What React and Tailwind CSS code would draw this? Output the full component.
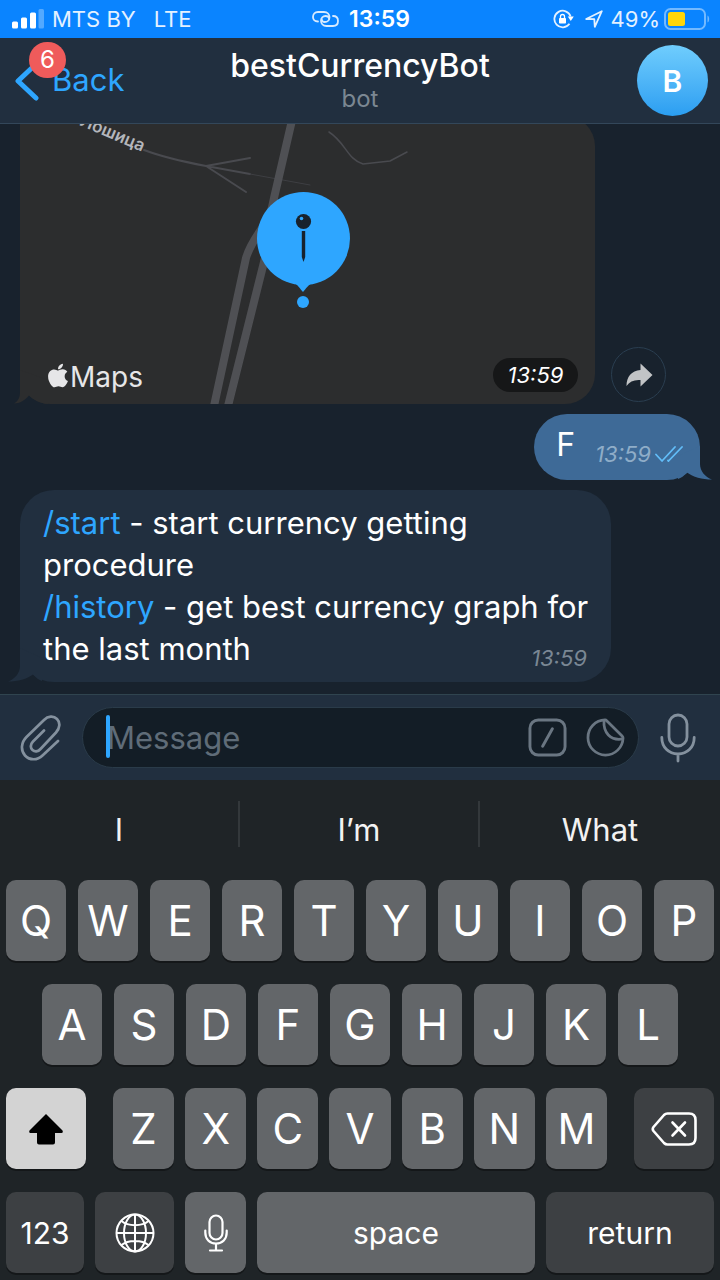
import React, { useState } from "react";
import { FaApple } from "react-icons/fa";

function StatusBar() {
  return (
    <div className="grid h-[38px] shrink-0 grid-cols-[1fr_auto_1fr] items-center bg-[#0a84ff] pl-3 pr-[10px] text-[22px] leading-7 text-[#e4f1ff]">
      <div className="flex items-center gap-2">
        <svg className="h-5 w-8" viewBox="0 0 32 20" fill="#fff" aria-hidden="true">
          <rect x="0" y="12.5" width="6" height="7" rx="1.5" />
          <rect x="9" y="8.5" width="6" height="11" rx="1.5" />
          <rect x="18" y="3.500" width="6" height="16" rx="1.500" />
          <rect x="26.500" y="0" width="5.500" height="19.500" rx="1.500" opacity="0.3" />
        </svg>
        <span>MTS BY</span>
        <span className="ml-[10px]">LTE</span>
      </div>
      <div className="flex items-center gap-[10px]">
        <svg className="h-4 w-[27px]" viewBox="0 0 27 16" fill="none" stroke="#d7eaff" strokeWidth="1.800" strokeLinecap="round" aria-hidden="true">
          <path d="M6 10.500C2.500 10.500 1 8.500 1 6C1 3 3 1 6 1H12C15.500 1 17.500 3.500 17.500 6.200C17.500 9 15.500 11 12.800 11C11 11 9.800 10 9.800 8.500" />
          <path d="M21 5C24.500 5 26 7.500 26 10C26 13 24 15 21 15H14.500C11 15 9 12.500 9 9.800C9 7 11 5 13.500 5C15.500 5 17 6 17 7.500" />
        </svg>
        <span className="text-[23px] font-semibold text-white">13:59</span>
      </div>
      <div className="flex items-center justify-end">
        <svg className="mr-[11px] h-5 w-[21px]" viewBox="0 0 21 20" aria-hidden="true">
          <path d="M17.600 7.500A8.300 8.300 0 1 0 16.500 14.800" fill="none" stroke="#e4f1ff" strokeWidth="1.800" />
          <path d="M14.800 7.500H20.800L17.800 12Z" fill="#fff" />
          <rect x="6" y="9" width="7" height="5.500" rx="0.800" fill="#fff" />
          <path d="M7.500 9V7.500a2 2 0 0 1 4 0V9" fill="none" stroke="#fff" strokeWidth="1.300" />
        </svg>
        <svg className="mr-2 h-[18px] w-[18px]" viewBox="0 0 18 18" fill="none" stroke="#e4f1ff" strokeWidth="1.800" strokeLinejoin="round" aria-hidden="true">
          <path d="M1.200 9L16.800 1.200L9.800 16.800L9.300 9.200Z" />
        </svg>
        <span>49%</span>
        <svg className="ml-1 h-[22px] w-[46px]" viewBox="0 0 46 22" aria-hidden="true">
          <rect x="1" y="1" width="40" height="20" rx="5.500" fill="none" stroke="#73b9ff" strokeWidth="2" />
          <rect x="4" y="4" width="17" height="14" rx="2.500" fill="#ffd60a" />
          <path d="M43.500 7.500c2.200 1 2.200 6 0 7z" fill="#73b9ff" />
        </svg>
      </div>
    </div>
  );
}

function Header() {
  return (
    <header className="grid h-[86px] shrink-0 grid-cols-[1fr_auto_1fr] items-center border-b border-[#33475a] bg-[#212f3f] pl-3 pr-3">
      <button type="button" className="relative flex items-center gap-3 justify-self-start text-[31px] leading-9 text-[#2ea6ff]">
        <svg className="h-10 w-7" viewBox="0 0 28 40" fill="none" stroke="#2ea6ff" strokeWidth="5" strokeLinecap="round" strokeLinejoin="round" aria-hidden="true">
          <path d="M24 3L6 20L24 37" />
        </svg>
        <span className="pb-0.5">Back</span>
        <span className="absolute -top-[19px] left-[17px] flex h-9 w-[37px] items-center justify-center rounded-full bg-[#ef5b5b] text-2xl leading-none text-white">6</span>
      </button>
      <div className="text-center">
        <h1 className="text-[32px] font-medium leading-9 text-white">bestCurrencyBot</h1>
        <p className="text-2xl leading-[30px] text-[#7b8792]">bot</p>
      </div>
      <button type="button" aria-label="Open profile" className="flex h-[71px] w-[71px] items-center justify-center justify-self-end rounded-full bg-linear-to-b from-[#6fcdfd] to-[#2a9ef1] text-3xl font-semibold text-white">
        B
      </button>
    </header>
  );
}

const TAILS = {
  left: "M12 0V18C12 25 7 31 0 33.500C10 33.500 19 31 25 26.500C28 30 31 32 34 33V10Z",
  right: "M22 0V18C22 25 27 31 34 33.500C24 33.500 15 31 9 26.500C6 30 3 32 0 33V10Z",
  map: "M6 0V22C6 28 4 31 0 33.500C6 33.500 11 30 15 25.500C20 30 26 33.500 34 34V10Z",
};

function Tail({ className, shape }) {
  return (
    <svg className={className} viewBox="0 0 34 34" fill="currentColor" aria-hidden="true">
      <path d={TAILS[shape]} />
    </svg>
  );
}

function MapMessage() {
  return (
    <div className="flex shrink-0 items-end gap-4 pl-5">
      <div className="relative h-[288px] w-[575px] max-w-full rounded-[30px] rounded-tl-lg bg-[#2c2d2e]">
        <Tail shape="map" className="absolute -left-1.5 bottom-0 h-[34px] w-[34px] text-[#2c2d2e]" />
        <svg className="relative block h-full w-full rounded-[30px] rounded-tl-lg" viewBox="0 0 575 288" preserveAspectRatio="xMidYMid slice" role="img" aria-label="Location on a map">
          <g fill="none" stroke="#494a4f" strokeLinecap="round" strokeLinejoin="round">
            <path d="M124 34C145 42 165 46 186 50L230 42M186 50L230 58M186 50L226 76" strokeWidth="2" />
            <path d="M230 58L290 69" strokeWidth="1" stroke="#3e3f43" />
            <path d="M309 16C326 27 327 43 343 48L370 45L387 36" strokeWidth="1.500" />
          </g>
          <g fill="none" stroke="#4f5054" strokeWidth="8">
            <path d="M273 0L254 82C250 110 233 118 226 142L194 290" />
            <path d="M254 82L253 110L241 158L208 290" />
          </g>
          <text x="59" y="9" transform="rotate(23 59 9)" fontSize="17" fill="#b4b6bb" fontWeight="600">Лошица</text>
          <g>
            <circle cx="283.500" cy="122.500" r="46.500" fill="#2ea6ff" />
            <path d="M272 166C278 168 280 173 283 176C286 173 288 168 295 166Z" fill="#2ea6ff" />
            <circle cx="283" cy="186" r="6" fill="#2ea6ff" />
            <circle cx="283.500" cy="105.500" r="7.600" fill="#18222d" />
            <circle cx="281.500" cy="102.500" r="1.800" fill="#2ea6ff" />
            <path d="M281.800 115H285.200V141L283.500 146L281.800 141Z" fill="#18222d" />
          </g>
        </svg>
        <div className="absolute bottom-[9px] left-[26px] flex items-center text-[28px] leading-9 text-[#e6e6e8]">
          <FaApple className="mb-1 h-[27px] w-6" aria-hidden="true" />
          <span>Maps</span>
        </div>
        <time className="absolute bottom-3 right-[17px] flex h-[34px] w-[85px] items-center justify-center rounded-full bg-[#161718] text-[22px] italic text-white">13:59</time>
      </div>
      <button type="button" aria-label="Forward" className="mb-[2px] flex h-[55px] w-[55px] shrink-0 items-center justify-center rounded-full border border-[#2a3e50] bg-[#18222d]">
        <svg className="h-6 w-7" viewBox="0 0 28 24" fill="#c2c4c6" aria-hidden="true">
          <path d="M15.500 0.500L27.500 12L15.500 23.500V17C9 16.500 4.500 18.500 1.500 23C1.500 14 6.500 7.500 15.500 7Z" />
        </svg>
      </button>
    </div>
  );
}

function Chat() {
  return (
    <main className="flex min-h-0 flex-1 flex-col justify-end gap-[10px] overflow-hidden bg-[#18222d] pb-3">
      <MapMessage />
      <div className="relative mr-5 flex h-[66px] shrink-0 items-center self-end rounded-[33px] bg-[#3e6a97] pl-[22px] pr-[17px]">
        <Tail shape="right" className="absolute -right-3 bottom-0 h-[34px] w-[34px] text-[#3e6a97]" />
        <p className="relative pb-1 text-[32px] leading-[42px] text-white">F</p>
        <time className="relative ml-5 mt-[14px] text-[22px] italic text-[#8fadc8]">13:59</time>
        <svg className="relative ml-1 mt-[14px] h-4 w-7" viewBox="0 0 28 16" fill="none" stroke="#62bdf8" strokeWidth="1.800" strokeLinecap="round" strokeLinejoin="round" aria-hidden="true">
          <path d="M1 8.500L7 15L20 1M13 14.500L13.500 15L27 1" />
        </svg>
      </div>
      <div className="relative ml-5 w-[591px] max-w-full shrink-0 rounded-[34px] bg-[#212f3f] pb-3 pl-[23px] pr-5 pt-3">
        <Tail shape="left" className="absolute -left-3 bottom-0 h-[34px] w-[34px] text-[#212f3f]" />
        <p className="relative text-[31px] leading-[42px] text-white">
          <a href="#start" className="text-[#2ea6ff]">/start</a> - start currency getting procedure
          <br />
          <a href="#history" className="text-[#2ea6ff]">/history</a> - get best currency graph for the last month
        </p>
        <time className="absolute bottom-3 right-6 text-[22px] leading-6 italic text-[#7a8794]">13:59</time>
      </div>
    </main>
  );
}

function Composer() {
  const [text, setText] = useState("");
  return (
    <div className="flex h-[86px] shrink-0 items-center border-t border-[#30444f] bg-[#212f3f] pl-5 pr-6">
      <button type="button" aria-label="Attach file" className="shrink-0">
        <svg className="h-[46px] w-[41px]" viewBox="0 0 41 46" fill="none" stroke="#84919e" strokeWidth="2.700" strokeLinecap="round" strokeLinejoin="round" aria-hidden="true">
          <path d="M24 15.500L13 26.500C10.200 29.500 10.200 33 12.500 35C14.800 37 18 36.800 20.500 34L36 17.500C40 13 40.500 7.500 37 4C33.500 0.500 28 1 24 5L6.500 22C1 27.500 0.500 35.500 5 40.500C9.500 45.500 17.500 45.500 22.500 40.500L38 26" />
        </svg>
      </button>
      <div className="relative ml-[21px] mr-[21px] flex h-[61px] min-w-0 flex-1 items-center gap-[19px] rounded-full border border-[#2a3b49] bg-[#131d26] pl-6 pr-[13px]">
        <span className="absolute left-[23px] top-[7px] h-[43px] w-1 rounded-sm bg-[#2ea6ff]" />
        <label htmlFor="message" className="sr-only">Message</label>
        <input
          id="message"
          type="text"
          placeholder="Message"
          value={text}
          onChange={(e) => setText(e.target.value)}
          className="h-10 min-w-0 flex-1 bg-transparent text-[31px] leading-10 text-white caret-[#2ea6ff] outline-none placeholder:text-[#5f6c78]"
        />
        <button type="button" aria-label="Commands" className="shrink-0">
          <svg className="h-[39px] w-[39px]" viewBox="0 0 40 40" fill="none" stroke="#6a7682" strokeWidth="3" strokeLinecap="round" aria-hidden="true">
            <rect x="2" y="2" width="36" height="36" rx="8.500" />
            <path d="M25 11L15 29" />
          </svg>
        </button>
        <button type="button" aria-label="Stickers" className="shrink-0">
          <svg className="h-[39px] w-[39px]" viewBox="0 0 40 40" fill="none" stroke="#6a7682" strokeWidth="2.800" strokeLinecap="round" strokeLinejoin="round" aria-hidden="true">
            <path d="M19.500 2A18 18 0 1 0 38 20.500Q38 19.500 37 18.500L21.500 3Q20.500 2 19.500 2Z" />
            <path d="M18.500 2.500C17.500 15 25 23.500 37.500 21.500" />
          </svg>
        </button>
      </div>
      <button type="button" aria-label="Record voice message" className="shrink-0">
        <svg className="h-[50px] w-9" viewBox="0 0 36 50" fill="none" stroke="#84919e" strokeWidth="2.800" strokeLinecap="round" aria-hidden="true">
          <rect x="9" y="2" width="18" height="31" rx="9" />
          <path d="M1.800 24.500C1.800 34 8.500 41 18 41S34.200 34 34.200 24.500M18 41V48" />
        </svg>
      </button>
    </div>
  );
}

function Key({ children, label, tone = "light", className = "flex-1" }) {
  const tones = {
    light: "bg-[#636669] text-white",
    dark: "bg-[#3d4043] text-white",
    active: "bg-[#d3d3d3] text-black",
  };
  return (
    <button
      type="button"
      aria-label={label}
      className={`flex h-[81px] min-w-0 items-center justify-center rounded-[10px] shadow-[0_2px_0_#141719] ${tones[tone]} ${className}`}
    >
      {children}
    </button>
  );
}

function Letters({ keys }) {
  return [...keys].map((k) => <Key key={k}>{k}</Key>);
}

function Keyboard() {
  return (
    <section aria-label="Keyboard" className="shrink-0 bg-[#1f2427] pb-[7px]">
      <div className="flex h-[100px] items-center">
        {["I", "I’m", "What"].map((word, i) => (
          <div key={word} className="flex flex-1 items-center">
            <button type="button" className="h-11 flex-1 text-[31px] leading-9 text-[#f2f2f2]">{word}</button>
            {i < 2 && <span className="-mt-3 h-[46px] w-0.5 bg-[#33383b]" />}
          </div>
        ))}
      </div>
      <div className="flex flex-col gap-[23px] text-[42px] leading-none">
        <div className="flex gap-3 px-[6px]"><Letters keys="QWERTYUIOP" /></div>
        <div className="flex gap-3 px-[42px]"><Letters keys="ASDFGHJKL" /></div>
        <div className="flex gap-[27px] px-[6px]">
          <Key tone="active" label="Shift" className="w-20 shrink-0">
            <svg className="h-8 w-9" viewBox="0 0 36 32" aria-hidden="true">
              <path d="M18 1L34.500 17.500Q35.500 19.500 33.500 20H27V29.500Q27 31.500 25 31.500H11Q9 31.500 9 29.500V20H2.500Q0.500 19.500 1.500 17.500Z" fill="currentColor" />
            </svg>
          </Key>
          <div className="flex flex-1 gap-[11px]"><Letters keys="ZXCVBNM" /></div>
          <Key tone="dark" label="Delete" className="w-20 shrink-0">
            <svg className="h-[34px] w-[46px]" viewBox="0 0 46 34" fill="none" stroke="currentColor" strokeWidth="2.600" strokeLinecap="round" strokeLinejoin="round" aria-hidden="true">
              <path d="M16.500 1.500H38Q44.500 1.500 44.500 8V26Q44.500 32.500 38 32.500H16.500Q14.500 32.500 13 31L2.500 19Q1 17 2.500 15L13 3Q14.500 1.500 16.500 1.500Z" />
              <path d="M21.500 10.500L34 23.500M34 10.500L21.500 23.500" />
            </svg>
          </Key>
        </div>
        <div className="grid grid-cols-[78fr_79fr_61fr_278fr_168fr] gap-[11px] px-[6px] text-[30px]">
          <Key tone="dark" className="">123</Key>
          <Key tone="dark" label="Next keyboard" className="">
            <svg className="h-10 w-10" viewBox="0 0 40 40" fill="none" stroke="currentColor" strokeWidth="2" aria-hidden="true">
              <circle cx="20" cy="20" r="18.500" />
              <ellipse cx="20" cy="20" rx="11" ry="18.500" />
              <path d="M20 1.500V38.500M1.500 20H38.500M6.500 8C13 13.500 27 13.500 33.500 8M6.500 32C13 26.500 27 26.500 33.500 32" />
            </svg>
          </Key>
          <Key label="Dictate" className="">
            <svg className="h-[38px] w-6" viewBox="0 0 24 38" fill="none" stroke="currentColor" strokeWidth="2.200" strokeLinecap="round" aria-hidden="true">
              <rect x="5.500" y="1.500" width="13" height="24" rx="6.500" />
              <path d="M1.300 16.500V18.500C1.300 25 5.500 29.500 12 29.500S22.700 25 22.700 18.500V16.500M12 29.500V36.500M6 36.500H18" />
            </svg>
          </Key>
          <Key className="">space</Key>
          <Key tone="dark" className="">return</Key>
        </div>
      </div>
    </section>
  );
}

export default function App() {
  return (
    <div className="flex h-screen flex-col overflow-hidden bg-[#18222d] font-['Inter','Noto_Sans',sans-serif]">
      <StatusBar />
      <Header />
      <Chat />
      <Composer />
      <Keyboard />
    </div>
  );
}
